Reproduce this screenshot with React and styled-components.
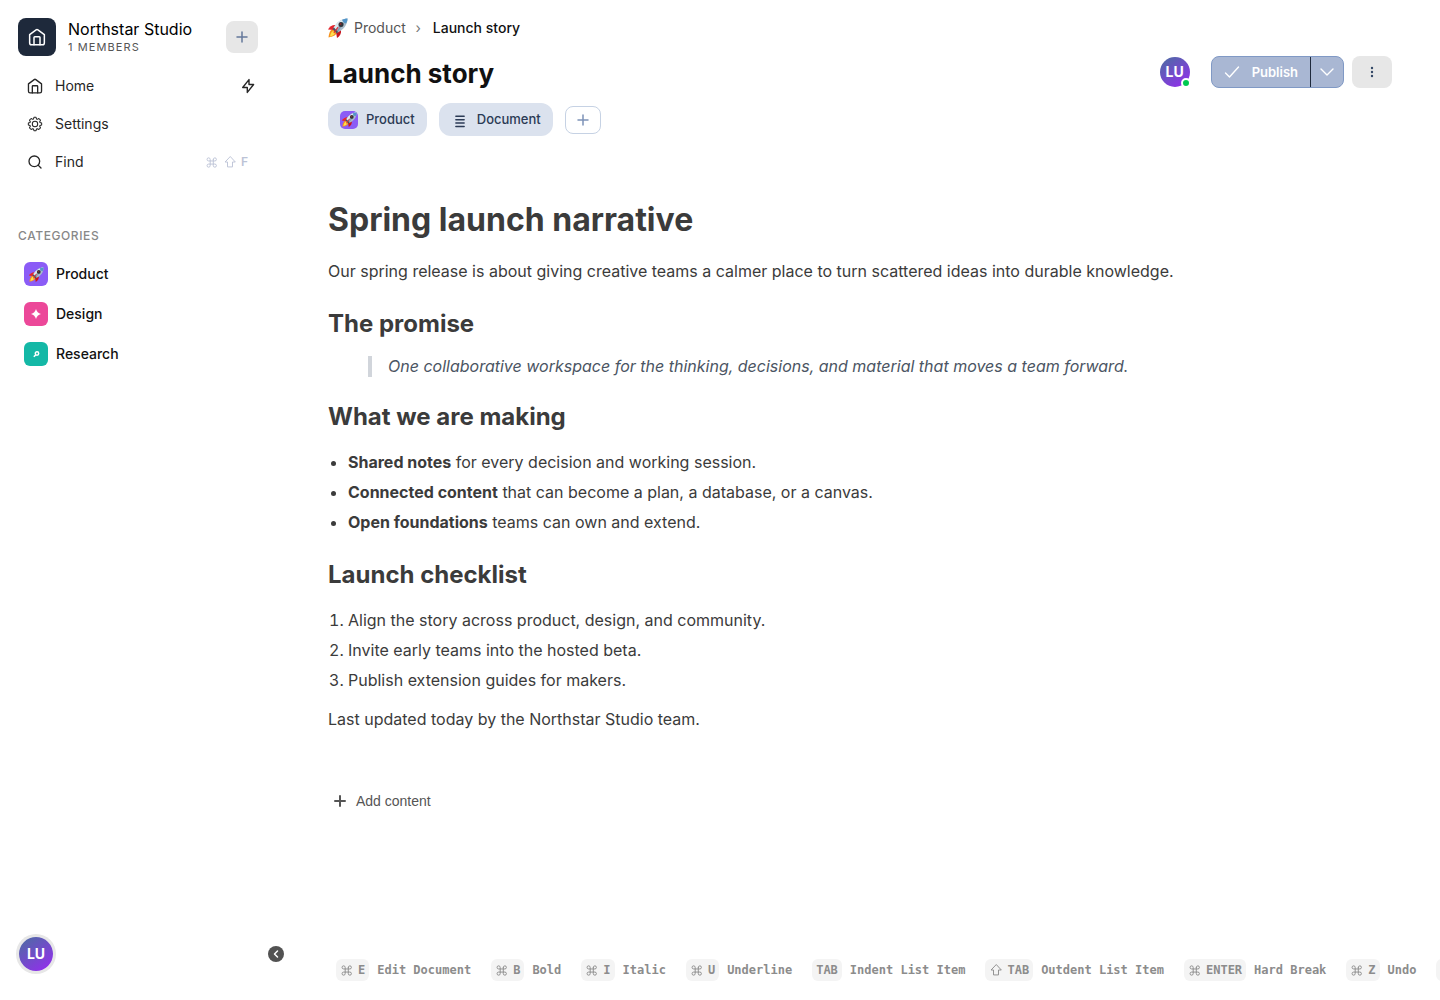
import styled, { createGlobalStyle, css } from 'styled-components';
import { ChevronDown, ChevronLeft, Search } from 'lucide-react';

const GlobalStyle = createGlobalStyle`
	* {
		box-sizing: border-box;
	}
	body {
		margin: 0;
		background: #fff;
		color: #111;
		font-family: Inter, 'Liberation Sans', sans-serif;
		font-size: 14px;
	}
	h1, h2, p, ul, ol, blockquote {
		margin: 0;
		padding: 0;
	}
	button {
		border: 0;
		padding: 0;
		background: none;
		color: inherit;
		font-family: inherit;
		cursor: pointer;
	}
	a {
		color: inherit;
		text-decoration: none;
	}
	svg {
		flex: none;
	}
`;

const Page = styled.div`
	display: flex;
	height: 100vh;
`;

const Sidebar = styled.aside`
	display: flex;
	flex-direction: column;
	flex: 0 0 276px;
	padding: 18px 18px 26px;
`;

const Workspace = styled.div`
	display: flex;
	align-items: center;
	gap: 12px;
`;

const WorkspaceLogo = styled.div`
	display: flex;
	align-items: center;
	justify-content: center;
	width: 38px;
	height: 38px;
	border-radius: 8px;
	background: #1e293b;
	color: #fff;
`;

const WorkspaceText = styled.div`
	flex: 1;
`;

const WorkspaceName = styled.div`
	font-size: 16px;
	line-height: 20px;
	color: #000;
`;

const WorkspaceMembers = styled.div`
	font-size: 11px;
	line-height: 16px;
	letter-spacing: 0.1em;
	color: #555;
`;

const SquareButton = styled.button`
	display: flex;
	align-items: center;
	justify-content: center;
	width: ${({ $wide }) => ($wide ? '40px' : '32px')};
	height: 32px;
	border-radius: 8px;
	background: #e7e7e7;
	color: ${({ $wide }) => ($wide ? '#334766' : '#64789b')};
`;

const Menu = styled.nav`
	display: flex;
	flex-direction: column;
	margin-top: 11px;
`;

const MenuRow = styled.div`
	display: flex;
	align-items: center;
	justify-content: space-between;
	height: 38px;
	padding-left: 9px;
`;

const MenuLink = styled.a`
	display: flex;
	align-items: center;
	gap: 12px;
	line-height: 20px;
	color: #262626;
`;

const QuickButton = styled.button`
	display: flex;
	margin-right: 2px;
	color: #262626;
`;

const FindKeys = styled.span`
	display: flex;
	align-items: center;
	gap: 4px;
	margin-right: 10px;
	color: #bcc3d6;
	font-size: 12px;
	line-height: 14px;
	font-weight: 600;
`;

const SectionLabel = styled.div`
	margin-top: 47px;
	margin-bottom: 10px;
	font-size: 12px;
	line-height: 16px;
	font-weight: 500;
	letter-spacing: 0.05em;
	color: #888;
`;

const CategoryLink = styled.a`
	display: flex;
	align-items: center;
	gap: 8px;
	height: 40px;
	padding-left: 6px;
	font-weight: 500;
	line-height: 18px;
	color: #111;
`;

const CategoryIcon = styled.span`
	display: flex;
	align-items: center;
	justify-content: center;
	flex: none;
	width: ${({ $size }) => $size}px;
	height: ${({ $size }) => $size}px;
	border-radius: ${({ $size }) => ($size > 20 ? 6 : 5)}px;
	background: ${({ $color }) => $color};
	color: #fff;
`;

const SidebarFooter = styled.div`
	display: flex;
	align-items: center;
	justify-content: space-between;
	margin-top: auto;
	margin-right: -26px;
	margin-left: -2px;
`;

const Avatar = styled.div`
	position: relative;
	display: flex;
	align-items: center;
	justify-content: center;
	border-radius: 50%;
	background: linear-gradient(145deg, #4a6fa0, #9829f2);
	color: #fff;
	font-weight: 700;
	font-size: 14px;
	line-height: 16px;
	${({ $ring }) =>
		$ring
			? css`
					width: 34px;
					height: 34px;
					margin: 3px;
					box-shadow: 0 0 0 3px #e7e7e7;
			  `
			: css`
					width: 30px;
					height: 30px;
			  `}
`;

const OnlineDot = styled.span`
	position: absolute;
	right: -1px;
	bottom: -1px;
	width: 10px;
	height: 10px;
	border: 2px solid #fff;
	border-radius: 50%;
	background: #00c950;
`;

const CollapseButton = styled.button`
	display: flex;
	align-items: center;
	justify-content: center;
	width: 16px;
	height: 16px;
	border-radius: 50%;
	background: #525252;
	color: #fff;
`;

const Main = styled.main`
	display: flex;
	flex-direction: column;
	flex: 1;
	min-width: 0;
	padding: 18px 0 0 52px;
`;

const Content = styled.div`
	padding-right: 48px;
`;

const Breadcrumbs = styled.nav`
	display: flex;
	align-items: center;
	height: 20px;
	line-height: 20px;
	color: #555;
`;

const CrumbIcon = styled.span`
	display: flex;
	margin-right: 6px;
`;

const CrumbSeparator = styled.span`
	width: 27px;
	padding-right: 2px;
	text-align: center;
	color: #777;
`;

const CurrentCrumb = styled.a`
	font-weight: 500;
	color: #111;
`;

const TitleBar = styled.header`
	display: flex;
	align-items: center;
	justify-content: space-between;
	margin-top: 18px;
	height: 32px;
`;

const PageTitle = styled.h1`
	padding-top: 4px;
	font-size: 26px;
	line-height: 36px;
	font-weight: 700;
	color: #111;
`;

const Actions = styled.div`
	display: flex;
	align-items: center;
	gap: 8px;
`;

const PublishGroup = styled.div`
	display: flex;
	height: 32px;
	margin-left: 13px;
	border: 1px solid #8099c5;
	border-radius: 8px;
	background: #a9b7d3;
	color: #fff;
`;

const PublishButton = styled.button`
	display: flex;
	align-items: center;
	gap: 8px;
	padding: 0 12px 0 8px;
	border-right: 1px solid #1e293b;
	font-size: 13px;
	font-weight: 600;
`;

const PublishMenuButton = styled.button`
	display: flex;
	align-items: center;
	justify-content: center;
	width: 32px;
`;

const Tags = styled.div`
	display: flex;
	align-items: center;
	gap: 12px;
	margin-top: 15px;
`;

const Tag = styled.button`
	display: flex;
	align-items: center;
	gap: 8px;
	height: 33px;
	padding: 0 12px;
	border-radius: 12px;
	background: #dbe2ee;
	color: #2b3a55;
	font-size: 13px;
	font-weight: 500;
	line-height: 17px;
`;

const AddTag = styled.button`
	display: flex;
	align-items: center;
	justify-content: center;
	width: 36px;
	height: 28px;
	border: 1px solid #c6d2e4;
	border-radius: 8px;
	color: #7e93b8;
`;

const Article = styled.article`
	margin-top: 60px;
	color: #3b3b3b;
	font-size: 16px;
	line-height: 30px;
`;

const ArticleTitle = styled.h1`
	margin-bottom: 13px;
	font-size: 32px;
	line-height: 48px;
	font-weight: 700;
`;

const ArticleHeading = styled.h2`
	margin: 20px 0 12px;
	font-size: 24px;
	line-height: 36px;
	font-weight: 700;
`;

const Paragraph = styled.p`
	margin: 10px 0 12px;
	line-height: 29px;
`;

const Quote = styled.blockquote`
	margin: 14px 40px 22px;
	padding-left: 16px;
	border-left: 4px solid #d1d5db;
	color: #4b5563;
	font-style: italic;
	line-height: 21px;
`;

const BulletList = styled.ul`
	padding-left: 20px;
`;

const NumberList = styled.ol`
	padding-left: 20px;
`;

const AddContent = styled.button`
	display: flex;
	align-items: center;
	gap: 4px;
	margin-top: 55px;
	height: 24px;
	color: #555;
	font-family: 'Liberation Sans', sans-serif;
	font-size: 14px;
`;

const Shortcuts = styled.footer`
	display: flex;
	gap: 20px;
	margin-top: auto;
	padding: 0 8px 19px;
	overflow: hidden;
	color: #8c8c8c;
	font-family: 'DejaVu Sans Mono', monospace;
	font-size: 12px;
	font-weight: 700;
	line-height: 22px;
	white-space: nowrap;
`;

const Shortcut = styled.span`
	display: flex;
	flex: none;
	gap: 8px;
`;

const Keys = styled.kbd`
	display: flex;
	align-items: center;
	gap: 4px;
	padding: 0 4px;
	border-radius: 6px;
	background: #f4f4f4;
	font-family: inherit;
`;

const Line = ({ size, width = 1.5, viewBox = '0 0 24 24', children }) => (
	<svg
		width={size}
		height={size}
		viewBox={viewBox}
		fill="none"
		stroke="currentColor"
		strokeWidth={width}
		strokeLinecap="round"
		strokeLinejoin="round"
		aria-hidden="true"
	>
		{children}
	</svg>
);

const HomeIcon = ({ size }) => (
	<Line size={size} width={2}>
		<path d="M2.2 8.8 10.8 2.4a2 2 0 0 1 2.4 0L21.8 8.8V20a2.4 2.4 0 0 1-2.4 2.4H4.6A2.4 2.4 0 0 1 2.2 20Z" />
		<path d="M8 22.4V12.6a1 1 0 0 1 1-1h6a1 1 0 0 1 1 1v9.8" />
	</Line>
);

const GearIcon = ({ size }) => (
	<Line size={size} width={1.6} viewBox="-0.5 -0.5 25 25">
		<circle cx="12" cy="12" r="4.2" />
		<path d="M9.6 4.2 10.4 1.6h3.2l.8 2.6 1.2.5 2.4-1.3 2.6 2.6-1.3 2.4.5 1.2 2.6.8v3.2l-2.6.8-.5 1.2 1.3 2.4-2.6 2.6-2.4-1.300-1.200.5-.8 2.600h-3.200l-.8-2.600-1.200-.5-2.400 1.300-2.600-2.600 1.300-2.400-.5-1.200-2.600-.8v-3.200l2.600-.8.5-1.200-1.300-2.400 2.600-2.600 2.400 1.300Z" />
	</Line>
);

const BoltIcon = () => (
	<Line size={16} width={1.4} viewBox="0 0 16 16">
		<path d="M9 1.6v4.9h4.6L7.3 14.4V9.5H2.7Z" />
	</Line>
);

const PlusIcon = ({ width }) => (
	<Line size={24} width={width}>
		<path d="M7 12h10M12 7v10" />
	</Line>
);

const CheckIcon = () => (
	<Line size={24} width={1.4}>
		<path d="M5.5 13l4 4L18.5 7" />
	</Line>
);

const DocumentIcon = () => (
	<Line size={18} width={2}>
		<path d="M6.5 7h11M6.5 11.5h11M6.5 16h11M6.5 20.5h11" />
	</Line>
);

const CommandIcon = () => (
	<Line size={14} width={1.8} viewBox="-1 -2.5 27 27">
		<path d="M15 6v12a3 3 0 1 0 3-3H6a3 3 0 1 0 3 3V6a3 3 0 1 0-3 3h12a3 3 0 1 0-3-3" />
	</Line>
);

const ShiftIcon = () => (
	<Line size={14} width={1.8} viewBox="-1.5 -1.5 27 27">
		<path d="M12 2 2.5 12h4.7v9.500h9.600V12h4.700Z" />
	</Line>
);

const MoreIcon = () => (
	<svg width="16" height="16" viewBox="0 0 16 16" fill="currentColor" aria-hidden="true">
		<circle cx="8" cy="4" r="1.2" />
		<circle cx="8" cy="8" r="1.2" />
		<circle cx="8" cy="12" r="1.2" />
	</svg>
);

const RocketIcon = ({ size }) => (
	<svg width={size} height={size} viewBox="0 0 40 40" aria-hidden="true">
		<path d="M11 22C5 23 2 29 1 39c9-2 15-4 16-10Z" fill="#f5921e" />
		<path d="M10 26c-4 2-5 6-6 11 5-1 9-3 10-7Z" fill="#ffe14d" />
		<path d="M16 14C9 13 3 17 0 23l12 1Z" fill="#e3262e" />
		<path d="M26 24c1 7-2 12-8 16l-2-12Z" fill="#c9151e" />
		<path d="M39 1C27 1 17 8 10 22l8 8C32 23 39 13 39 1Z" fill="#a9bccb" />
		<path d="M39 1C28 1 18 8 11 20l4 3C22 13 30 6 39 1Z" fill="#dde8ef" />
		<path d="M39 1 18 30l-3-3Z" fill="#6c879b" opacity=".6" />
		<path d="M39 1c-4 0-8 1-11 3 2 4 4 6 8 7 2-3 3-6 3-10Z" fill="#5295c9" />
		<path d="m9 22 9 9 2-3-8-9Z" fill="#46535e" />
		<circle cx="26" cy="13" r="5" fill="#30343b" />
		<circle cx="25" cy="12" r="2" fill="#8a2a30" />
		<path d="M21 19 12 31l-1-2 8-11Z" fill="#e3262e" />
	</svg>
);

const SparkIcon = () => (
	<svg width="12" height="12" viewBox="0 0 12 12" fill="currentColor" aria-hidden="true">
		<path d="M6 1c.8 2.800 2.200 4.200 5 5-2.800.8-4.200 2.200-5 5-.8-2.800-2.200-4.200-5-5 2.800-.8 4.200-2.200 5-5Z" />
	</svg>
);

const LensIcon = () => (
	<svg width="12" height="12" viewBox="0 0 12 12" fill="none" stroke="currentColor" aria-hidden="true">
		<circle cx="7" cy="5.5" r="1.7" strokeWidth="1.5" />
		<path d="M5.8 6.7 3.800 8.700" strokeWidth="1.6" />
	</svg>
);

const categories = [
	{ name: 'Product', icon: <RocketIcon size={15} />, color: '#8b5cf6' },
	{ name: 'Design', icon: <SparkIcon />, color: '#ec4899' },
	{ name: 'Research', icon: <LensIcon />, color: '#14b8a6' },
];

const shortcuts = [
	{ mod: 'cmd', keyName: 'E', label: 'Edit Document' },
	{ mod: 'cmd', keyName: 'B', label: 'Bold' },
	{ mod: 'cmd', keyName: 'I', label: 'Italic' },
	{ mod: 'cmd', keyName: 'U', label: 'Underline' },
	{ keyName: 'TAB', label: 'Indent List Item' },
	{ mod: 'shift', keyName: 'TAB', label: 'Outdent List Item' },
	{ mod: 'cmd', keyName: 'ENTER', label: 'Hard Break' },
	{ mod: 'cmd', keyName: 'Z', label: 'Undo' },
	{ mod: 'cmd', keyName: 'Y', label: 'Redo' },
];

const App = () => (
	<>
		<GlobalStyle />
		<Page>
			<Sidebar>
				<Workspace>
					<WorkspaceLogo>
						<HomeIcon size={18} />
					</WorkspaceLogo>
					<WorkspaceText>
						<WorkspaceName>Northstar Studio</WorkspaceName>
						<WorkspaceMembers>1 MEMBERS</WorkspaceMembers>
					</WorkspaceText>
					<SquareButton aria-label="Create">
						<PlusIcon width={1.5} />
					</SquareButton>
				</Workspace>
				<Menu>
					<MenuRow>
						<MenuLink href="#home">
							<HomeIcon size={16} />
							Home
						</MenuLink>
						<QuickButton aria-label="Quick actions">
							<BoltIcon />
						</QuickButton>
					</MenuRow>
					<MenuRow>
						<MenuLink href="#settings">
							<GearIcon size={16} />
							Settings
						</MenuLink>
					</MenuRow>
					<MenuRow>
						<MenuLink href="#find">
							<Search size={16} strokeWidth={2} />
							Find
						</MenuLink>
						<FindKeys>
							<CommandIcon />
							<ShiftIcon />
							<span>F</span>
						</FindKeys>
					</MenuRow>
				</Menu>
				<SectionLabel>CATEGORIES</SectionLabel>
				{categories.map(({ name, icon, color }) => (
					<CategoryLink key={name} href={`#${name.toLowerCase()}`}>
						<CategoryIcon $size={24} $color={color}>
							{icon}
						</CategoryIcon>
						{name}
					</CategoryLink>
				))}
				<SidebarFooter>
					<Avatar $ring>LU</Avatar>
					<CollapseButton aria-label="Collapse sidebar">
						<ChevronLeft size={12} strokeWidth={3} />
					</CollapseButton>
				</SidebarFooter>
			</Sidebar>
			<Main>
				<Content>
					<Breadcrumbs>
						<CrumbIcon>
							<RocketIcon size={20} />
						</CrumbIcon>
						<a href="#product">Product</a>
						<CrumbSeparator>›</CrumbSeparator>
						<CurrentCrumb href="#launch">Launch story</CurrentCrumb>
					</Breadcrumbs>
					<TitleBar>
						<PageTitle>Launch story</PageTitle>
						<Actions>
							<Avatar>
								LU
								<OnlineDot />
							</Avatar>
							<PublishGroup>
								<PublishButton>
									<CheckIcon />
									Publish
								</PublishButton>
								<PublishMenuButton aria-label="Publish options">
									<ChevronDown size={24} strokeWidth={1.4} />
								</PublishMenuButton>
							</PublishGroup>
							<SquareButton $wide aria-label="More">
								<MoreIcon />
							</SquareButton>
						</Actions>
					</TitleBar>
					<Tags>
						<Tag>
							<CategoryIcon $size={18} $color="#8b5cf6">
								<RocketIcon size={15} />
							</CategoryIcon>
							Product
						</Tag>
						<Tag>
							<DocumentIcon />
							Document
						</Tag>
						<AddTag aria-label="Add tag">
							<PlusIcon width={1.5} />
						</AddTag>
					</Tags>
					<Article>
						<ArticleTitle>Spring launch narrative</ArticleTitle>
						<Paragraph>
							Our spring release is about giving creative teams a calmer place to turn scattered ideas
							into durable knowledge.
						</Paragraph>
						<ArticleHeading>The promise</ArticleHeading>
						<Quote>
							One collaborative workspace for the thinking, decisions, and material that moves a team
							forward.
						</Quote>
						<ArticleHeading>What we are making</ArticleHeading>
						<BulletList>
							<li>
								<strong>Shared notes</strong> for every decision and working session.
							</li>
							<li>
								<strong>Connected content</strong> that can become a plan, a database, or a canvas.
							</li>
							<li>
								<strong>Open foundations</strong> teams can own and extend.
							</li>
						</BulletList>
						<ArticleHeading>Launch checklist</ArticleHeading>
						<NumberList>
							<li>Align the story across product, design, and community.</li>
							<li>Invite early teams into the hosted beta.</li>
							<li>Publish extension guides for makers.</li>
						</NumberList>
						<Paragraph>Last updated today by the Northstar Studio team.</Paragraph>
					</Article>
					<AddContent>
						<PlusIcon width={2} />
						Add content
					</AddContent>
				</Content>
				<Shortcuts>
					{shortcuts.map(({ mod, keyName, label }) => (
						<Shortcut key={label}>
							<Keys>
								{mod === 'cmd' && <CommandIcon />}
								{mod === 'shift' && <ShiftIcon />}
								{keyName}
							</Keys>
							{label}
						</Shortcut>
					))}
				</Shortcuts>
			</Main>
		</Page>
	</>
);

export default App;
